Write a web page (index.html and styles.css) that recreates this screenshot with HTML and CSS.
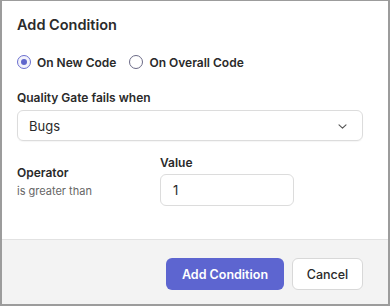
FILE: index.html
```html
<!DOCTYPE html>
<html>
<head>
<meta charset="utf-8">
<link rel="stylesheet" href="styles.css">
</head>
<body>
<div class="modal">
  <div class="body">
    <h2 class="title">Add Condition</h2>
    <div class="radios">
      <label class="radio"><span class="dot checked"></span>On New Code</label>
      <label class="radio"><span class="dot"></span>On Overall Code</label>
    </div>
    <div class="label">Quality Gate fails when</div>
    <div class="select">
      <span>Bugs</span>
      <svg class="chev" width="9" height="5" viewBox="0 0 9 5"><path d="M1 0.8l3.5 3.4 3.5-3.4" fill="none" stroke="#555" stroke-width="1.1" stroke-linecap="round" stroke-linejoin="round"/></svg>
    </div>
    <div class="row">
      <div class="op">
        <div class="label">Operator</div>
        <div class="sub">is greater than</div>
      </div>
      <div class="val">
        <div class="label">Value</div>
        <div class="input">1</div>
      </div>
    </div>
  </div>
  <div class="footer">
    <button class="btn primary">Add Condition</button>
    <button class="btn secondary">Cancel</button>
  </div>
</div>
</body>
</html>
```
FILE: styles.css
```css
html, body { margin: 0; padding: 0; background: #fff; }
body { font-family: Inter, "Noto Sans", sans-serif; color: #2a2a2a; }
.modal {
  width: 390px; height: 306px; box-sizing: border-box;
  border: 2px solid #9c9c9c; border-top-width: 1px;
  display: flex; flex-direction: column; background: #fff;
}
.body { flex: 1; padding: 14px 25px 0 15px; }
.title { margin: 0; font-size: 14.5px; line-height: 20px; font-weight: 600; color: #2b2b2b; }
.radios { display: flex; gap: 13px; margin-top: 17px; height: 20px; align-items: center; }
.radio { display: flex; align-items: center; gap: 6px; font-size: 12px; font-weight: 600; color: #2a2a2a; }
.dot {
  width: 14px; height: 14px; box-sizing: border-box; border-radius: 50%;
  border: 1px solid #6b6a86; display: flex; align-items: center; justify-content: center; background: #fff;
}
.dot.checked { border-color: #6a6fcf; background: #f3f3fb; }
.dot.checked::after { content: ""; width: 6px; height: 6px; border-radius: 50%; background: #5f66cc; }
.label { font-size: 12px; font-weight: 600; line-height: 16px; color: #2a2a2a; }
.body > .label { margin-top: 18px; }
.select {
  margin-top: 4px; height: 31px; box-sizing: border-box; border: 1px solid #dcdcdc; border-radius: 6px;
  display: flex; align-items: center; justify-content: space-between; padding: 0 15px 0 11px;
  font-size: 13px; color: #2a2a2a; box-shadow: 0 1px 1px rgba(0,0,0,0.04);
}
.chev { margin-top: 1px; }
.row { display: flex; margin-top: 14px; }
.op { width: 143px; padding-top: 10px; }
.sub { font-size: 11px; line-height: 16px; margin-top: 2px; color: #666; }
.val { display: flex; flex-direction: column; }
.input {
  margin-top: 3px; width: 134px; height: 32px; box-sizing: border-box; border: 1px solid #dcdcdc;
  border-radius: 6px; font-size: 13px; display: flex; align-items: center; padding-left: 12px; color: #2a2a2a;
}
.footer {
  background: #f3f3f3; border-top: 1px solid #e2e2e2; height: 65px; box-sizing: border-box;
  display: flex; justify-content: flex-end; align-items: flex-start; gap: 8px; padding: 18px 25px 0 0;
}
.btn {
  height: 32px; border-radius: 6px; font-family: Inter, sans-serif; font-size: 12.5px; font-weight: 600;
  box-sizing: border-box; cursor: pointer;
}
.primary { width: 118px; background: #5d65d0; color: #fff; border: none; }
.secondary { width: 71px; background: #fff; color: #2a2a2a; border: 1px solid #d8d8d8; font-weight: 500; }
```
